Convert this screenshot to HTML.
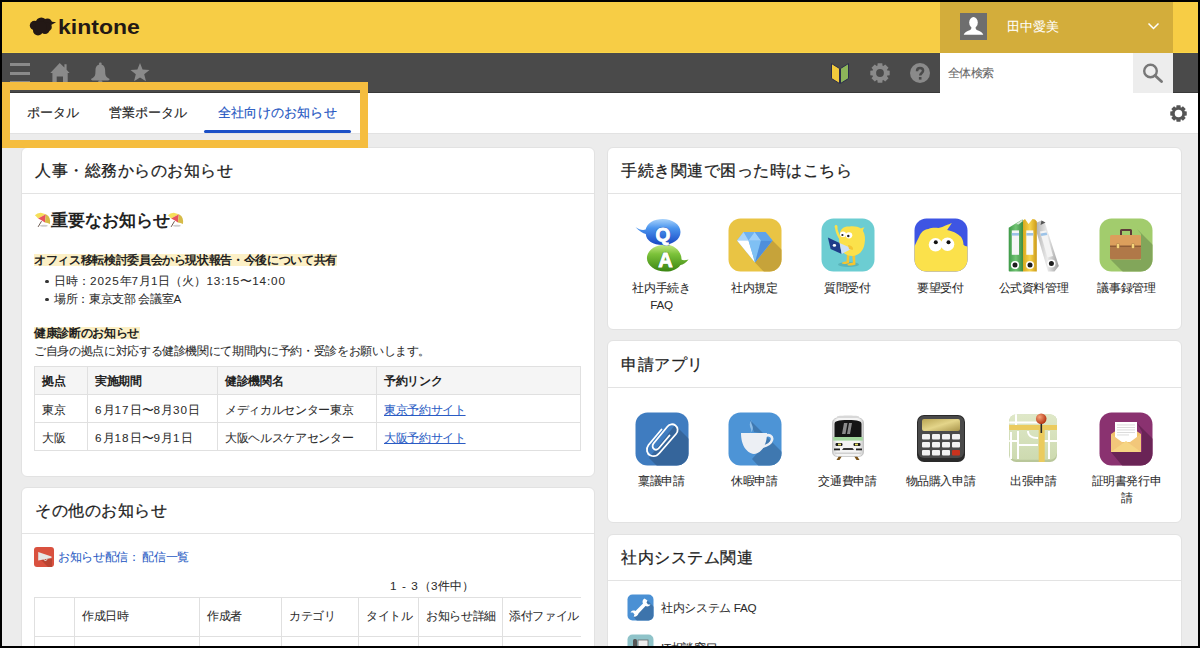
<!DOCTYPE html>
<html lang="ja">
<head>
<meta charset="utf-8">
<style>
*{box-sizing:border-box;margin:0;padding:0}
html,body{width:1200px;height:648px;overflow:hidden;background:#000}
body{font-family:"Liberation Sans",sans-serif;color:#222;position:relative}
.a{position:absolute}
#frame{position:absolute;left:2px;top:2px;width:1196px;height:644px;background:#ececec;overflow:hidden}
.t{position:absolute;white-space:nowrap;line-height:1;-webkit-text-stroke:0.05px currentColor}
.t[style*="bold"]{-webkit-text-stroke:0}
.card{position:absolute;background:#fff;border:1px solid #e2e2e2;border-radius:6px}
.ch{position:absolute;left:0;right:0;top:0;height:46px;border-bottom:1px solid #e3e3e3}
</style>
</head>
<body>
<div id="frame"></div>

<!-- yellow header -->
<div class="a" style="left:2px;top:2px;width:1196px;height:50px;background:#f7cd45"></div>
<div class="a" style="left:2px;top:52px;width:1196px;height:1px;background:#fad647"></div>
<!-- logo -->
<svg class="a" style="left:29px;top:16px" width="28" height="21" viewBox="0 0 28 21">
  <g fill="#231815">
    <circle cx="5.5" cy="9.5" r="4.7"/><circle cx="12.3" cy="7" r="5.6"/><circle cx="18.5" cy="7" r="4.5"/>
    <circle cx="9" cy="14.5" r="5"/><circle cx="16" cy="13.5" r="4.6"/><circle cx="18.5" cy="11" r="4.3"/><circle cx="12" cy="11" r="6"/>
    <path d="M21.3 5.4 L27.1 6.3 L22.5 8.7 Z"/>
  </g>
</svg>
<div class="t" style="left:58px;top:16.5px;font-size:23px;font-weight:bold;color:#231815;letter-spacing:0;transform:scale(1,0.9);transform-origin:0 1.5px">kintone</div>

<!-- user area -->
<div class="a" style="left:940px;top:2px;width:233px;height:50.5px;background:#d3ad3b"></div>
<div class="a" style="left:960px;top:13px;width:27px;height:27px;background:#6e6e6e;overflow:hidden">
  <svg width="27" height="27" viewBox="0 0 27 27"><g fill="#fff"><ellipse cx="13.5" cy="9.4" rx="4.3" ry="5.3"/><path d="M3.7 21.8 C4.3 19.6 7 18.4 9.6 17.3 C11 16.6 11.6 15.6 11.4 13.8 L15.6 13.8 C15.4 15.6 16 16.6 17.4 17.3 C20 18.4 22.7 19.6 23.3 21.8 Z"/></g></svg>
</div>
<div class="t" style="left:1007px;top:20px;font-size:13.3px;color:#fff">田中愛美</div>
<svg class="a" style="left:1147px;top:21px" width="13" height="10" viewBox="0 0 13 10"><path d="M1.5 2.5 L6.5 7.5 L11.5 2.5" fill="none" stroke="#fff" stroke-width="1.5"/></svg>

<!-- dark nav bar -->
<div class="a" style="left:2px;top:53px;width:1196px;height:39px;background:#4a4a4a"></div>
<div class="a" style="left:2px;top:92px;width:1196px;height:1px;background:#383838"></div>
<div class="a" style="left:10px;top:63px;width:20px;height:2.5px;background:#8a8a8a"></div>
<div class="a" style="left:10px;top:72px;width:20px;height:2.5px;background:#8a8a8a"></div>
<div class="a" style="left:10px;top:81px;width:20px;height:2.5px;background:#8a8a8a"></div>
<!-- home -->
<svg class="a" style="left:50px;top:62px" width="20" height="22" viewBox="0 0 20 22"><path fill="#8a8a8a" fill-rule="evenodd" d="M9.7 1 L0.3 11 L2.4 11 L2.4 22 L17.7 22 L17.7 11 L19.6 11 L16.6 7.8 L16.6 2.2 L14.4 2.2 L14.4 5.5 Z M6.7 14.5 L13 14.5 L13 22 L6.7 22 Z"/></svg>
<!-- bell -->
<svg class="a" style="left:91px;top:62px" width="20" height="22" viewBox="0 0 20 22"><g fill="#8a8a8a"><circle cx="9.3" cy="2" r="1.4"/><path d="M9.3 2.6 C6.3 2.6 4.6 4.8 4.5 8 L4.3 12 C4 14.6 2.2 15.8 0.3 16.8 C-0.2 17.4 0.3 18.3 1.5 18.5 L17.1 18.5 C18.3 18.3 18.8 17.4 18.3 16.8 C16.4 15.8 14.6 14.6 14.3 12 L14.1 8 C14 4.8 12.3 2.6 9.3 2.6 Z"/><ellipse cx="9.3" cy="19.5" rx="2" ry="1.2"/></g></svg>
<!-- star -->
<svg class="a" style="left:130px;top:62px" width="20" height="21" viewBox="0 0 20 21"><path fill="#8a8a8a" d="M10 1 L12.6 7.6 L19.5 7.9 L14.2 12.3 L16 19.3 L10 15.4 L4 19.3 L5.8 12.3 L0.5 7.9 L7.4 7.6 Z"/></svg>
<!-- wakaba -->
<svg class="a" style="left:830px;top:61px" width="20" height="24" viewBox="0 0 20 24"><path d="M1.5 2.5 L9.5 7.5 L9.5 22.5 L1.5 17.5 Z" fill="#f2ca3c" stroke="#2b2d4a" stroke-width="1"/><path d="M18.5 2.5 L10.5 7.5 L10.5 22.5 L18.5 17.5 Z" fill="#8db55a" stroke="#2b2d4a" stroke-width="1"/></svg>
<!-- gear -->
<svg class="a" style="left:870px;top:63px" width="20" height="20" viewBox="0 0 20 20"><g fill="#8a8a8a"><circle cx="10" cy="10" r="7.6"/><g id="t"><path d="M7.7 0.3 L12.3 0.3 L12.8 4 L7.2 4 Z"/><path d="M7.7 19.7 L12.3 19.7 L12.8 16 L7.2 16 Z"/><path d="M0.3 7.7 L0.3 12.3 L4 12.8 L4 7.2 Z"/><path d="M19.7 7.7 L19.7 12.3 L16 12.8 L16 7.2 Z"/></g><g transform="rotate(45 10 10)"><path d="M7.7 0.3 L12.3 0.3 L12.8 4 L7.2 4 Z"/><path d="M7.7 19.7 L12.3 19.7 L12.8 16 L7.2 16 Z"/><path d="M0.3 7.7 L0.3 12.3 L4 12.8 L4 7.2 Z"/><path d="M19.7 7.7 L19.7 12.3 L16 12.8 L16 7.2 Z"/></g></g><circle cx="10" cy="10" r="3.9" fill="#4a4a4a"/></svg>
<!-- help -->
<svg class="a" style="left:910px;top:63px" width="20" height="20" viewBox="0 0 20 20"><circle cx="10" cy="10" r="10" fill="#8a8a8a"/><path d="M7 8.2 C7 6.2 8.3 5 10 5 C11.9 5 13.1 6.2 13.1 7.8 C13.1 9.9 10.2 10.2 10.2 12.6" fill="none" stroke="#4a4a4a" stroke-width="2.5"/><rect x="8.9" y="14" width="2.6" height="2.6" fill="#4a4a4a"/></svg>
<!-- search -->
<div class="a" style="left:940px;top:53px;width:193px;height:40px;background:#fff"></div>
<div class="t" style="left:948px;top:67px;font-size:12px;letter-spacing:-0.6px;color:#666">全体検索</div>
<div class="a" style="left:1133px;top:53px;width:40px;height:40px;background:#ededed"></div>
<svg class="a" style="left:1142px;top:63px" width="22" height="20" viewBox="0 0 22 20"><circle cx="8.5" cy="8" r="6.3" fill="none" stroke="#777" stroke-width="2.4"/><path d="M13 12.5 L19.5 18.5" stroke="#777" stroke-width="2.8" stroke-linecap="round"/></svg>

<!-- tab bar -->
<div class="a" style="left:2px;top:93px;width:1196px;height:40px;background:#fff"></div>
<div class="a" style="left:2px;top:133px;width:1196px;height:1px;background:#e2e2e2"></div>
<div class="t" style="left:27px;top:106px;font-size:13.3px;color:#222;-webkit-text-stroke:0.15px #222">ポータル</div>
<div class="t" style="left:109px;top:106px;font-size:13.3px;color:#222;-webkit-text-stroke:0.15px #222">営業ポータル</div>
<div class="t" style="left:218px;top:106px;font-size:13.3px;letter-spacing:0.2px;color:#2456c2;-webkit-text-stroke:0.15px #2456c2">全社向けのお知らせ</div>
<div class="a" style="left:204px;top:130px;width:147px;height:3px;background:#1a4fc6;border-radius:2px"></div>
<svg class="a" style="left:1170px;top:105px" width="17" height="17" viewBox="0 0 20 20"><g fill="#555"><circle cx="10" cy="10" r="7.3"/><g id="t"><path d="M7.7 0.3 L12.3 0.3 L12.8 4 L7.2 4 Z"/><path d="M7.7 19.7 L12.3 19.7 L12.8 16 L7.2 16 Z"/><path d="M0.3 7.7 L0.3 12.3 L4 12.8 L4 7.2 Z"/><path d="M19.7 7.7 L19.7 12.3 L16 12.8 L16 7.2 Z"/></g><g transform="rotate(45 10 10)"><path d="M7.7 0.3 L12.3 0.3 L12.8 4 L7.2 4 Z"/><path d="M7.7 19.7 L12.3 19.7 L12.8 16 L7.2 16 Z"/><path d="M0.3 7.7 L0.3 12.3 L4 12.8 L4 7.2 Z"/><path d="M19.7 7.7 L19.7 12.3 L16 12.8 L16 7.2 Z"/></g></g><circle cx="10" cy="10" r="4.4" fill="#fff"/></svg>

<!-- left card 1 -->
<div class="card" style="left:21px;top:147px;width:574px;height:329.5px"></div>
<div class="a" style="left:22px;top:193px;width:572px;height:1px;background:#e3e3e3"></div>
<div class="t" style="left:35px;top:163px;font-size:16px;letter-spacing:0.5px;color:#222;-webkit-text-stroke:0.25px #222">人事・総務からのお知らせ</div>
<svg class="a" style="left:34px;top:211px" width="17" height="17" viewBox="0 0 17 17"><ellipse cx="9.9" cy="14.8" rx="3.8" ry="1" fill="#b8b8b8" opacity="0.7"/><path d="M7.5 10.2 L4.1 15.9" stroke="#6d5a50" stroke-width="1"/><path d="M0.9 4.3 Q3 2 6.8 1.75 L11.9 3.3 L4.1 7.5 Q2.5 5.5 0.9 4.3 Z" fill="#f5df5a"/><path d="M11.9 3.3 L4.1 7.5 Q7.5 9 10.9 11.6 Z" fill="#e8545c"/><path d="M11.9 3.3 Q15 5 15.6 7.2 Q16.5 10 16 13 Q13.5 11.8 10.9 11.6 Z" fill="#d6bb48"/></svg>
<div class="t" style="left:51px;top:212.5px;font-size:16.6px;font-weight:bold;color:#222">重要なお知らせ</div>
<svg class="a" style="left:167px;top:211px" width="17" height="17" viewBox="0 0 17 17"><ellipse cx="9.9" cy="14.8" rx="3.8" ry="1" fill="#b8b8b8" opacity="0.7"/><path d="M7.5 10.2 L4.1 15.9" stroke="#6d5a50" stroke-width="1"/><path d="M0.9 4.3 Q3 2 6.8 1.75 L11.9 3.3 L4.1 7.5 Q2.5 5.5 0.9 4.3 Z" fill="#f5df5a"/><path d="M11.9 3.3 L4.1 7.5 Q7.5 9 10.9 11.6 Z" fill="#e8545c"/><path d="M11.9 3.3 Q15 5 15.6 7.2 Q16.5 10 16 13 Q13.5 11.8 10.9 11.6 Z" fill="#d6bb48"/></svg>

<div class="a" style="left:34px;top:254px;width:303px;height:12px;background:#fcf0c6"></div>
<div class="t" style="left:34px;top:254px;font-size:11.7px;letter-spacing:-0.35px;font-weight:bold;color:#222">オフィス移転検討委員会から現状報告・今後について共有</div>
<div class="a" style="left:45px;top:279.5px;width:3.5px;height:3.5px;border-radius:50%;background:#333"></div>
<div class="t" style="left:54px;top:275px;font-size:11.7px;color:#2b2b2b">日時：<span style="letter-spacing:0.9px">2025</span>年<span style="letter-spacing:0.9px">7</span>月<span style="letter-spacing:0.9px">1</span>日（火）<span style="letter-spacing:0.9px">13:15</span>〜<span style="letter-spacing:0.9px">14:00</span></div>
<div class="a" style="left:45px;top:297.5px;width:3.5px;height:3.5px;border-radius:50%;background:#333"></div>
<div class="t" style="left:54px;top:293px;font-size:11.7px;letter-spacing:-0.35px;color:#2b2b2b">場所：東京支部 会議室A</div>

<div class="a" style="left:34px;top:327px;width:106px;height:12px;background:#fcf0c6"></div>
<div class="t" style="left:34px;top:327px;font-size:11.7px;letter-spacing:-0.35px;font-weight:bold;color:#222">健康診断のお知らせ</div>
<div class="t" style="left:34px;top:345px;font-size:11.7px;letter-spacing:-0.35px;color:#2b2b2b">ご自身の拠点に対応する健診機関にて期間内に予約・受診をお願いします。</div>

<!-- table 1 -->
<div class="a" style="left:34px;top:366px;width:547px;height:85px;border:1px solid #e0e0e0"></div>
<div class="a" style="left:35px;top:367px;width:545px;height:27px;background:#f5f5f5"></div>
<div class="a" style="left:35px;top:394px;width:545px;height:1px;background:#e0e0e0"></div>
<div class="a" style="left:35px;top:422px;width:545px;height:1px;background:#e0e0e0"></div>
<div class="a" style="left:87px;top:367px;width:1px;height:83px;background:#e0e0e0"></div>
<div class="a" style="left:217px;top:367px;width:1px;height:83px;background:#e0e0e0"></div>
<div class="a" style="left:376px;top:367px;width:1px;height:83px;background:#e0e0e0"></div>
<div class="t" style="left:42px;top:375px;font-size:11.7px;letter-spacing:-0.35px;font-weight:bold;color:#222">拠点</div>
<div class="t" style="left:95px;top:375px;font-size:11.7px;letter-spacing:-0.35px;font-weight:bold;color:#222">実施期間</div>
<div class="t" style="left:225px;top:375px;font-size:11.7px;letter-spacing:-0.35px;font-weight:bold;color:#222">健診機関名</div>
<div class="t" style="left:384px;top:375px;font-size:11.7px;letter-spacing:-0.35px;font-weight:bold;color:#222">予約リンク</div>
<div class="t" style="left:42px;top:404px;font-size:11.7px;letter-spacing:-0.35px;color:#2b2b2b">東京</div>
<div class="t" style="left:95px;top:404px;font-size:11.7px;color:#2b2b2b"><span style="letter-spacing:1px">6</span>月<span style="letter-spacing:1px">17</span>日〜<span style="letter-spacing:1px">8</span>月<span style="letter-spacing:1px">30</span>日</div>
<div class="t" style="left:225px;top:404px;font-size:11.7px;letter-spacing:-0.35px;color:#2b2b2b">メディカルセンター東京</div>
<div class="t" style="left:384px;top:404px;font-size:11.7px;letter-spacing:-0.35px;color:#2a5bc4;text-decoration:underline">東京予約サイト</div>
<div class="t" style="left:42px;top:432px;font-size:11.7px;letter-spacing:-0.35px;color:#2b2b2b">大阪</div>
<div class="t" style="left:95px;top:432px;font-size:11.7px;color:#2b2b2b"><span style="letter-spacing:1px">6</span>月<span style="letter-spacing:1px">18</span>日〜<span style="letter-spacing:1px">9</span>月<span style="letter-spacing:1px">1</span>日</div>
<div class="t" style="left:225px;top:432px;font-size:11.7px;letter-spacing:-0.35px;color:#2b2b2b">大阪ヘルスケアセンター</div>
<div class="t" style="left:384px;top:432px;font-size:11.7px;letter-spacing:-0.35px;color:#2a5bc4;text-decoration:underline">大阪予約サイト</div>

<!-- left card 2 -->
<div class="card" style="left:21px;top:487px;width:574px;height:200px"></div>
<div class="a" style="left:22px;top:533px;width:572px;height:1px;background:#e3e3e3"></div>
<div class="t" style="left:35px;top:503px;font-size:16px;letter-spacing:0.5px;color:#222;-webkit-text-stroke:0.25px #222">その他のお知らせ</div>
<svg class="a" style="left:34px;top:547px" width="20" height="20" viewBox="0 0 20 20"><rect x="0" y="0" width="20" height="20" rx="3" fill="#d9513f"/><path d="M4 6 L18 12 L18 20 L14 20 L4 10 Z" fill="#b2412f" opacity="0.8"/><path d="M4.2 5 L17.5 9.5 L17.5 11 L4.2 13.5 Z" fill="#e6e6e6"/><path d="M10 12.3 C10 14 13 14 13 12" fill="none" stroke="#e6e6e6" stroke-width="1"/></svg>
<div class="t" style="left:58px;top:551px;font-size:11.7px;letter-spacing:-0.35px;color:#2a5bc4">お知らせ配信： 配信一覧</div>
<div class="t" style="left:390px;top:580px;font-size:11.7px;color:#2b2b2b"><span style="letter-spacing:1.1px">1 - 3</span>（<span style="letter-spacing:0.6px">3</span>件中）</div>
<!-- table 2 -->
<div class="a" style="left:34px;top:597px;width:547px;height:1px;background:#e0e0e0"></div>
<div class="a" style="left:34px;top:636px;width:547px;height:1px;background:#e0e0e0"></div>
<div class="a" style="left:34px;top:597px;width:1px;height:60px;background:#e0e0e0"></div>
<div class="a" style="left:74px;top:597px;width:1px;height:60px;background:#e0e0e0"></div>
<div class="a" style="left:199px;top:597px;width:1px;height:60px;background:#e0e0e0"></div>
<div class="a" style="left:281px;top:597px;width:1px;height:60px;background:#e0e0e0"></div>
<div class="a" style="left:358px;top:597px;width:1px;height:60px;background:#e0e0e0"></div>
<div class="a" style="left:418px;top:597px;width:1px;height:60px;background:#e0e0e0"></div>
<div class="a" style="left:502px;top:597px;width:1px;height:60px;background:#e0e0e0"></div>
<div class="t" style="left:82px;top:610px;font-size:11.7px;letter-spacing:-0.35px;color:#2b2b2b">作成日時</div>
<div class="t" style="left:207px;top:610px;font-size:11.7px;letter-spacing:-0.35px;color:#2b2b2b">作成者</div>
<div class="t" style="left:289px;top:610px;font-size:11.7px;letter-spacing:-0.35px;color:#2b2b2b">カテゴリ</div>
<div class="t" style="left:366px;top:610px;font-size:11.7px;letter-spacing:-0.35px;color:#2b2b2b">タイトル</div>
<div class="t" style="left:426px;top:610px;font-size:11.7px;letter-spacing:-0.35px;color:#2b2b2b">お知らせ詳細</div>
<div class="t" style="left:509px;top:610px;font-size:11.7px;letter-spacing:-0.35px;color:#2b2b2b">添付ファイル</div>


<!-- right card 1 -->
<div class="card" style="left:607px;top:147px;width:575px;height:182.5px"></div>
<div class="a" style="left:608px;top:193px;width:573px;height:1px;background:#e3e3e3"></div>
<div class="t" style="left:621px;top:163px;font-size:16px;letter-spacing:0.5px;color:#222;-webkit-text-stroke:0.25px #222">手続き関連で困った時はこちら</div>

<!-- QA -->
<svg class="a" style="left:635px;top:218px" width="54" height="54" viewBox="0 0 54 54">
 <defs>
  <linearGradient id="gq" x1="0" y1="0" x2="0" y2="1"><stop offset="0" stop-color="#a8d2fb"/><stop offset="0.35" stop-color="#4b95ee"/><stop offset="1" stop-color="#1746c4"/></linearGradient>
  <linearGradient id="ga" x1="0" y1="0" x2="0" y2="1"><stop offset="0" stop-color="#c4e882"/><stop offset="0.35" stop-color="#7cc23a"/><stop offset="1" stop-color="#3a8512"/></linearGradient>
 </defs>
 <path d="M0.6 9.3 C4 13 8 15.5 10.8 16 C11 22.5 18 27 27.8 27 C37.5 27 45.5 21.5 45.5 14 C45.5 6.5 37.5 1 27.8 1 C19 1 12.3 5 10.6 11.5 C7.5 12.5 4 11.5 0.6 9.3 Z" fill="url(#gq)"/>
 <path d="M53.6 41.4 C50 42.5 47.5 42.3 46.5 41.5 C46.8 34 39.5 26.6 30.7 26.6 C20 26.6 11.9 33 11.9 40.1 C11.9 47.3 20 53.6 30.7 53.6 C37.5 53.6 42.5 51 45.5 47 C48 46.5 51.5 44.5 53.6 41.4 Z" fill="url(#ga)"/>
 <text x="27.8" y="23" text-anchor="middle" fill="#2a56b8" stroke="#2a56b8" stroke-width="2" style="font:bold 19px 'Liberation Sans',sans-serif" opacity="0.6">Q</text>
 <text x="27.8" y="23" text-anchor="middle" fill="#fff" stroke="#fff" stroke-width="0.9" style="font:bold 19px 'Liberation Sans',sans-serif">Q</text>
 <text x="30.5" y="48.5" text-anchor="middle" fill="#3a7a18" stroke="#3a7a18" stroke-width="2" style="font:bold 20px 'Liberation Sans',sans-serif" opacity="0.6">A</text>
 <text x="30.5" y="48.5" text-anchor="middle" fill="#fff" stroke="#fff" stroke-width="0.9" style="font:bold 20px 'Liberation Sans',sans-serif">A</text>
</svg>
<div class="t" style="left:615px;top:282px;width:93px;text-align:center;font-size:11.7px;letter-spacing:-0.35px;color:#2b2b2b">社内手続き</div>
<div class="t" style="left:615px;top:299px;width:93px;text-align:center;font-size:11.7px;letter-spacing:-0.35px;color:#2b2b2b">FAQ</div>

<!-- diamond -->
<svg class="a" style="left:728px;top:218px" width="54" height="54" viewBox="0 0 54 54">
 <defs><clipPath id="c1"><rect x="0.5" y="0.5" width="53" height="53" rx="12"/></clipPath></defs>
 <rect x="0.5" y="0.5" width="53" height="53" rx="12" fill="#e9c444"/>
 <g clip-path="url(#c1)"><path d="M44.5 22.5 L27 44.5 L38 56 L60 56 L60 38 Z" fill="#c6a33a"/></g>
 <path d="M15.5 14 L37.5 14 L44.5 22.5 L27 44.5 L9 22.5 Z" fill="#6fb2ef"/>
 <path d="M9 22.5 L15.5 14 L20.5 22.5 Z" fill="#a9d4f8"/>
 <path d="M9 22.5 L20.5 22.5 L27 44.5 Z" fill="#ffffff"/>
 <path d="M20.5 22.5 L33 22.5 L27 44.5 Z" fill="#7fc0f4"/>
 <path d="M20.5 22.5 L26.7 14 L33 22.5 Z" fill="#9ed0fa"/>
 <path d="M33 22.5 L44.5 22.5 L27 44.5 Z" fill="#4f8fdc"/>
 <path d="M26.7 14 L37.5 14 L44.5 22.5 L33 22.5 Z" fill="#5fa3ea"/>
</svg>
<div class="t" style="left:708px;top:282px;width:93px;text-align:center;font-size:11.7px;letter-spacing:-0.35px;color:#2b2b2b">社内規定</div>

<!-- 質問受付 -->
<svg class="a" style="left:821px;top:218px" width="54" height="54" viewBox="0 0 54 54">
 <rect x="0.5" y="0.5" width="53" height="53" rx="12" fill="#6ccdd2"/>
 <ellipse cx="27.5" cy="46.5" rx="10.5" ry="2.6" fill="#5ab5ba"/>
 <path d="M26 36 L25.5 43.5 C22 43.5 20.5 44.5 21 45.5 C22 46.3 26 46 28 45 L28.5 36 Z" fill="#f5c531"/>
 <path d="M31 36 L32 44.5 C28.5 45 26 46 26.5 47 C27.5 48 32 47.5 34.5 46.5 L34 36 Z" fill="#f5c531"/>
 <path d="M14 10 C13 8 14 6.5 15.5 7 C17 7.5 16.5 9.5 16.5 11 C17.5 15 19 18 21 20 L19 22 C16.5 19 14.5 14.5 14 10 Z" fill="#fbe14b"/>
 <path d="M19 16 C19 10.5 23.5 8 28.5 8.5 C33 8 37 8.5 40 10.5 C41 9.8 42.5 9.5 43.5 9.5 C42.5 10.5 42 11.5 42 13 C44 16 44.5 21 43.5 26 C42.5 33 37.5 38 31 38 C24 38 19.5 33 18.5 26 C18 22 18.3 19 19 16 Z" fill="#fbe14b"/>
 <ellipse cx="22" cy="16.3" rx="3" ry="2.8" fill="#fff"/><ellipse cx="28" cy="17.3" rx="3.3" ry="3.1" fill="#fff"/>
 <circle cx="21.4" cy="17" r="1.1" fill="#222"/><circle cx="27.3" cy="18" r="1.2" fill="#222"/>
 <path d="M6.9 19.4 L18.6 25 L20.7 36.1 L9.6 31 Z" fill="#1f3d8a"/>
 <path d="M18.6 25 L31 30.5 L20.7 36.1 Z" fill="#cfe0f6"/>
 <ellipse cx="13.4" cy="27.4" rx="1.7" ry="1.4" fill="#fff"/>
 <path d="M27 27 C31 27.5 33 30 31.5 32 L28 31 Z" fill="#f5c531"/>
</svg>
<div class="t" style="left:801px;top:282px;width:93px;text-align:center;font-size:11.7px;letter-spacing:-0.35px;color:#2b2b2b">質問受付</div>

<!-- 要望受付 -->
<svg class="a" style="left:914px;top:218px" width="54" height="54" viewBox="0 0 54 54">
 <defs><clipPath id="c2"><rect x="0.5" y="0.5" width="53" height="53" rx="12"/></clipPath></defs>
 <rect x="0.5" y="0.5" width="53" height="53" rx="12" fill="#3e55e3"/>
 <g clip-path="url(#c2)">
 <path d="M-2 60 L-2 28 L0.6 28 C2 25 3.5 22 5 19 C7 14 10 11.5 14.4 11 C18 9.5 21 9.8 24.5 10 C27 9.6 29.5 8.5 31.5 7.5 C34 6.5 36.5 5.5 37.8 4.9 C36.5 7 34.5 9.5 33.2 12 C38 13 43 15 46.9 18.7 C48.5 21 49.5 24 49.5 26.8 C51 28 52 28.5 56 29 L56 60 Z" fill="#fbe14b"/>
 </g>
 <circle cx="21.5" cy="26.8" r="6.8" fill="#fff"/><circle cx="33.5" cy="26.3" r="6.8" fill="#fff"/>
 <circle cx="21.8" cy="24.3" r="2" fill="#111"/><circle cx="34.5" cy="24.3" r="2" fill="#111"/>
</svg>
<div class="t" style="left:894px;top:282px;width:93px;text-align:center;font-size:11.7px;letter-spacing:-0.35px;color:#2b2b2b">要望受付</div>

<!-- 公式資料管理 binders -->
<svg class="a" style="left:1006px;top:218px" width="54" height="54" viewBox="0 0 54 54">
 <defs>
  <linearGradient id="gg" x1="0" x2="1"><stop offset="0" stop-color="#3e9a48"/><stop offset="0.5" stop-color="#72c474"/><stop offset="1" stop-color="#3d8c42"/></linearGradient>
  <linearGradient id="gy" x1="0" x2="1"><stop offset="0" stop-color="#d9a81e"/><stop offset="0.5" stop-color="#f6d34c"/><stop offset="1" stop-color="#cc9a18"/></linearGradient>
  <linearGradient id="gs" x1="0" x2="1"><stop offset="0" stop-color="#b0b0b0"/><stop offset="0.5" stop-color="#ececec"/><stop offset="1" stop-color="#9c9c9c"/></linearGradient>
 </defs>
 <path d="M29.8 5 L35.5 2.5 L39 5 L52.8 48 L48.5 53.4 L42 53.4 L30.5 14 Z" fill="url(#gs)"/>
 <path d="M35.5 2.5 L39.5 4.5 L34.5 7 Z" fill="#555"/>
 <path d="M2.7 9.8 L15.9 1.7 L17 1.7 L17 53.6 L3.5 53.6 Q2.7 53.6 2.7 52.5 Z" fill="url(#gg)"/>
 <path d="M10 6 L15.9 1.7 L17 3 L12.5 6.5 Z" fill="#d8e8d8"/>
 <path d="M17 2.5 L19 1 L22.5 6 L26.5 1 L29 1.5 L30.8 3.5 L30.8 53.4 L17 53.4 Z" fill="url(#gy)"/>
 <rect x="5.8" y="12.4" width="7.2" height="24.4" fill="#f6f6f6"/><rect x="5.8" y="15" width="7.2" height="2.6" fill="#9cc3e8"/>
 <rect x="20.3" y="12.4" width="7" height="24.4" fill="#fafafa"/><rect x="20.3" y="15" width="7" height="2.6" fill="#9cc3e8"/>
 <path d="M34 13.5 L40 12.5 L47 38 L41.5 39.5 Z" fill="#f4f4f4"/><path d="M34.6 15.5 L40.6 14.5 L41.3 17 L35.3 18 Z" fill="#9cc3e8"/>
 <circle cx="9" cy="47" r="4.1" fill="#fff"/><circle cx="9" cy="47" r="2.5" fill="#1e1e1e"/>
 <circle cx="24" cy="47" r="4.1" fill="#fff"/><circle cx="24" cy="47" r="2.5" fill="#1e1e1e"/>
 <circle cx="45.4" cy="45.5" r="4.1" fill="#fff"/><circle cx="45.4" cy="45.5" r="2.5" fill="#1e1e1e"/>
</svg>
<div class="t" style="left:987px;top:282px;width:93px;text-align:center;font-size:11.7px;letter-spacing:-0.35px;color:#2b2b2b">公式資料管理</div>

<!-- 議事録管理 briefcase -->
<svg class="a" style="left:1099px;top:218px" width="54" height="54" viewBox="0 0 54 54">
 <defs><clipPath id="c3"><rect x="0.5" y="0.5" width="53" height="53" rx="12"/></clipPath></defs>
 <rect x="0.5" y="0.5" width="53" height="53" rx="12" fill="#a2cc6d"/>
 <g clip-path="url(#c3)"><path d="M38 11 L60 33 L60 60 L30 60 L12 42 L42 42 L42 16 Z" fill="#82a65a"/></g>
 <path d="M21 17 L21 12.5 Q21 11 22.5 11 L31.5 11 Q33 11 33 12.5 L33 17 L31 17 L31 13 L23 13 L23 17 Z" fill="#5e3a3a"/>
 <rect x="11" y="17" width="31" height="12.5" rx="1.5" fill="#dc9f5c"/>
 <rect x="11" y="28" width="31" height="13.5" rx="1.5" fill="#b07848"/>
 <rect x="11" y="27.5" width="31" height="1.5" fill="#8e5c36"/>
 <rect x="17.5" y="25.5" width="3" height="5" rx="1" fill="#f6d57a" stroke="#8e5c36" stroke-width="0.4"/>
 <rect x="32.5" y="25.5" width="3" height="5" rx="1" fill="#f6d57a" stroke="#8e5c36" stroke-width="0.4"/>
</svg>
<div class="t" style="left:1080px;top:282px;width:93px;text-align:center;font-size:11.7px;letter-spacing:-0.35px;color:#2b2b2b">議事録管理</div>

<!-- right card 2 -->
<div class="card" style="left:607px;top:340px;width:575px;height:183px"></div>
<div class="a" style="left:608px;top:386.5px;width:573px;height:1px;background:#e3e3e3"></div>
<div class="t" style="left:621px;top:357px;font-size:16px;letter-spacing:0.5px;color:#222;-webkit-text-stroke:0.25px #222">申請アプリ</div>

<!-- paperclip -->
<svg class="a" style="left:635px;top:412px" width="54" height="54" viewBox="0 0 54 54">
 <defs><clipPath id="c4"><rect x="0.5" y="0.5" width="53" height="53" rx="12"/></clipPath></defs>
 <rect x="0.5" y="0.5" width="53" height="53" rx="12" fill="#3f7cc0"/>
 <g clip-path="url(#c4)"><path d="M40 13 L62 35 L62 62 L30 62 L14 46 Z" fill="#35659b"/></g>
 <path d="M26.5 17.5 L13.5 33 C10.5 37 12 42 15.5 43.5 C19 45 22 44 24.5 41 L41 22 C43.5 19 43 15.5 40.5 13.5 C38 11.5 34.5 12 32.5 14.5 L18.5 31.5 C17 33.5 17.5 36 19 37 C20.5 38 22.5 37.8 24 36 L34.5 23.5" fill="none" stroke="#fff" stroke-width="1.8" stroke-linecap="round" stroke-linejoin="round"/>
</svg>
<div class="t" style="left:615px;top:475px;width:93px;text-align:center;font-size:11.7px;letter-spacing:-0.35px;color:#2b2b2b">稟議申請</div>

<!-- cup -->
<svg class="a" style="left:728px;top:412px" width="54" height="54" viewBox="0 0 54 54">
 <defs><clipPath id="c5"><rect x="0.5" y="0.5" width="53" height="53" rx="12"/></clipPath></defs>
 <rect x="0.5" y="0.5" width="53" height="53" rx="12" fill="#4d94d6"/>
 <g clip-path="url(#c5)"><path d="M22 8 L62 48 L62 62 L38 62 L24 47 L34 36 L39 22 L26 20 Z" fill="#3f78b0"/></g>
 <path d="M23.5 8 C21 11 21.5 14 23 17 C23.5 18.5 23 20 22 21 C25 19 25.5 16 24 13 C23 11 23 9.5 23.5 8 Z" fill="#8fbde6"/>
 <path d="M13 21 L39 21 C39 26 38 33 34 37.5 C31 41 28 42 26 42 C24 42 21 41 18 37.5 C14 33 13 26 13 21 Z" fill="#eceff4"/>
 <path d="M37 24 C41 22 45 24 44 28 C43 32 38 34 34 35" fill="none" stroke="#eceff4" stroke-width="2.6"/>
</svg>
<div class="t" style="left:708px;top:475px;width:93px;text-align:center;font-size:11.7px;letter-spacing:-0.35px;color:#2b2b2b">休暇申請</div>

<!-- train -->
<svg class="a" style="left:821px;top:412px" width="54" height="54" viewBox="0 0 54 54">
 <defs><linearGradient id="gtr" x1="0" x2="1"><stop offset="0" stop-color="#cfcfcf"/><stop offset="0.15" stop-color="#f4f4f4"/><stop offset="0.85" stop-color="#f4f4f4"/><stop offset="1" stop-color="#c8c8c8"/></linearGradient></defs>
 <path d="M18 44 L15.5 48 L18.5 48 L21 44 Z M36 44 L38.5 48 L35.5 48 L33 44 Z" fill="#7a5218"/>
 <path d="M11.5 11 C11.5 6 16 5 27 5 C38 5 42.5 6 42.5 11 L42.5 40 C42.5 43 40.5 44.5 37.5 44.5 L16.5 44.5 C13.5 44.5 11.5 43 11.5 40 Z" fill="url(#gtr)" stroke="#b0b0b0" stroke-width="0.6"/>
 <path d="M16 4.5 C19 3.3 35 3.3 38 4.5 L38 6 L16 6 Z" fill="#d8d8d8"/>
 <path d="M13.5 12 C13.5 9 17 8 27 8 C37 8 40.5 9 40.5 12 L40.5 25 L13.5 25 Z" fill="#151515"/>
 <path d="M23 11 L26.5 11 L24.5 22 L21 22 Z M28 11 L31 11 L29 22 L26 22 Z" fill="#8a8a8a"/>
 <rect x="12.2" y="25" width="29.6" height="3.6" fill="#a3d79e"/>
 <rect x="14.5" y="31" width="7" height="3" rx="1.2" fill="#1a1a1a"/><rect x="32.5" y="31" width="7" height="3" rx="1.2" fill="#1a1a1a"/>
 <rect x="17" y="31.6" width="3" height="1.8" fill="#e9e36a"/><rect x="34" y="31.6" width="3" height="1.8" fill="#e9e36a"/>
 <rect x="13" y="36.5" width="6" height="1.8" fill="#222"/><rect x="35" y="36.5" width="6" height="1.8" fill="#222"/>
 <path d="M21 38 L33 38 L31.5 36 L22.5 36 Z" fill="#333"/>
 <rect x="14" y="40.5" width="26" height="1.5" fill="#d0d0d0"/>
</svg>
<div class="t" style="left:801px;top:475px;width:93px;text-align:center;font-size:11.7px;letter-spacing:-0.35px;color:#2b2b2b">交通費申請</div>

<!-- calculator -->
<svg class="a" style="left:914px;top:412px" width="54" height="54" viewBox="0 0 54 54">
 <defs><linearGradient id="glcd" x1="0" x2="1" y1="0" y2="1"><stop offset="0" stop-color="#b9a553"/><stop offset="0.5" stop-color="#e4d58a"/><stop offset="1" stop-color="#a8944a"/></linearGradient></defs>
 <rect x="3" y="3" width="48" height="47" rx="7" fill="#2a2a2a"/>
 <rect x="4" y="4" width="46" height="42" rx="6" fill="#4a4a4a"/>
 <rect x="8" y="7" width="38" height="12" rx="2" fill="url(#glcd)"/>
 <g fill="#f2f2f2">
  <rect x="8" y="22" width="8" height="5.5" rx="1"/><rect x="18" y="22" width="8" height="5.5" rx="1"/><rect x="28" y="22" width="8" height="5.5" rx="1"/><rect x="38" y="22" width="8" height="5.5" rx="1"/>
  <rect x="8" y="30" width="8" height="5.5" rx="1"/><rect x="18" y="30" width="8" height="5.5" rx="1"/><rect x="28" y="30" width="8" height="5.5" rx="1"/><rect x="38" y="30" width="8" height="5.5" rx="1"/>
  <rect x="8" y="38" width="8" height="5.5" rx="1"/><rect x="18" y="38" width="8" height="5.5" rx="1"/><rect x="28" y="38" width="8" height="5.5" rx="1"/>
 </g>
 <rect x="38" y="38" width="8" height="5.5" rx="1" fill="#c8321e"/>
</svg>
<div class="t" style="left:894px;top:475px;width:93px;text-align:center;font-size:11.7px;letter-spacing:-0.35px;color:#2b2b2b">物品購入申請</div>

<!-- map -->
<svg class="a" style="left:1007px;top:412px" width="54" height="54" viewBox="0 0 54 54">
 <defs><radialGradient id="gpin" cx="0.35" cy="0.35" r="0.7"><stop offset="0" stop-color="#f6a57a"/><stop offset="1" stop-color="#b3300e"/></radialGradient>
 <linearGradient id="gmap" x1="0" x2="0" y1="0" y2="1"><stop offset="0" stop-color="#dfe8c8"/><stop offset="1" stop-color="#cddab0"/></linearGradient></defs>
 <rect x="2.2" y="2.5" width="47.8" height="47.5" rx="7" fill="#b9c79a"/>
 <rect x="2.2" y="2.2" width="47.8" height="45.5" rx="7" fill="url(#gmap)"/>
 <g fill="#fff">
  <rect x="8" y="2.2" width="2" height="11"/><rect x="2.2" y="9.5" width="30" height="2"/><rect x="3" y="20" width="2" height="27"/><rect x="10" y="19" width="2" height="28"/><rect x="10" y="32" width="21" height="2"/><rect x="2.2" y="28" width="8" height="2"/><rect x="37" y="28" width="13" height="2"/><rect x="41" y="19" width="2" height="28"/><path d="M20 19 C20 24 24 27 31 27 L31 25 C25 25 22 23 22 19 Z"/>
 </g>
 <rect x="2.2" y="13" width="47.8" height="5" fill="#ebcb5e"/>
 <rect x="31.7" y="13" width="6" height="37" fill="#ebcb5e"/>
 <rect x="33.5" y="8" width="1.6" height="13" fill="#2a2a2a"/>
 <circle cx="34.2" cy="6.7" r="5.3" fill="url(#gpin)"/>
</svg>
<div class="t" style="left:987px;top:475px;width:93px;text-align:center;font-size:11.7px;letter-spacing:-0.35px;color:#2b2b2b">出張申請</div>

<!-- envelope -->
<svg class="a" style="left:1099px;top:412px" width="54" height="54" viewBox="0 0 54 54">
 <defs><clipPath id="c6"><rect x="0.5" y="0.5" width="53" height="53" rx="12"/></clipPath></defs>
 <rect x="0.5" y="0.5" width="53" height="53" rx="12" fill="#8a3270"/>
 <g clip-path="url(#c6)"><path d="M38 11 L62 35 L62 62 L30 62 L12 40 L43 40 L43 20 Z" fill="#6a2456"/></g>
 <path d="M12 22 L27 12 L42 22 L42 40 L12 40 Z" fill="#f0c06a"/>
 <rect x="16" y="10" width="22" height="20" fill="#fff"/>
 <g fill="#d8d8d8"><rect x="18" y="12.5" width="18" height="0.9"/><rect x="18" y="15" width="18" height="0.9"/><rect x="18" y="17.5" width="18" height="0.9"/><rect x="18" y="20" width="18" height="0.9"/><rect x="18" y="22.5" width="12" height="0.9"/></g>
 <path d="M12 22 L27 33 L42 22 L42 40 L12 40 Z" fill="#f2c77a"/>
 <path d="M12 40 L27 29 L42 40 Z" fill="#f6d583"/>
</svg>
<div class="t" style="left:1080px;top:475px;width:93px;text-align:center;font-size:11.7px;letter-spacing:-0.35px;color:#2b2b2b">証明書発行申</div>
<div class="t" style="left:1080px;top:492px;width:93px;text-align:center;font-size:11.7px;letter-spacing:-0.35px;color:#2b2b2b">請</div>

<!-- right card 3 -->
<div class="card" style="left:607px;top:534px;width:575px;height:200px"></div>
<div class="a" style="left:608px;top:580px;width:573px;height:1px;background:#e3e3e3"></div>
<div class="t" style="left:621px;top:550px;font-size:16px;letter-spacing:0.5px;color:#222;-webkit-text-stroke:0.25px #222">社内システム関連</div>
<svg class="a" style="left:627px;top:594px" width="27" height="27" viewBox="0 0 27 27">
 <defs><clipPath id="c7"><rect x="0.5" y="0.5" width="26" height="26" rx="5"/></clipPath></defs>
 <rect x="0.5" y="0.5" width="26" height="26" rx="5" fill="#4a90d4"/>
 <g clip-path="url(#c7)"><path d="M20 6 L32 18 L32 32 L14 32 L6 22 Z" fill="#3d74ac"/></g>
 <path d="M17.5 4.5 C15.5 5.5 15 8 16 9.5 L8.5 17 C7 16 4.5 16.5 3.5 18.5 L6 18.5 L7.5 20.5 L6.5 22.5 C8.5 23 11 22 11.5 19.5 L18.5 12 C20 13 22.5 12.5 23.5 10.5 L21 10.5 L19.5 8.5 L20.5 6.5 Z" fill="#fff"/>
</svg>
<div class="t" style="left:661px;top:602px;font-size:11.7px;letter-spacing:-0.35px;color:#2b2b2b">社内システム FAQ</div>
<svg class="a" style="left:627px;top:634px" width="27" height="27" viewBox="0 0 27 27">
 <rect x="0.5" y="0.5" width="26" height="26" rx="5" fill="#8fc3c9"/>
 <rect x="6" y="5" width="4" height="12" rx="1.5" fill="#555"/><rect x="11" y="6" width="10" height="9" fill="#eee" stroke="#666" stroke-width="0.8"/>
</svg>
<div class="t" style="left:661px;top:642px;font-size:11.7px;letter-spacing:-0.35px;color:#2b2b2b">IT相談窓口</div>


<!-- orange highlight box -->
<div class="a" style="left:2px;top:82px;width:366px;height:66px;border:8px solid #f5bd3f"></div>
<div class="a" style="left:0;top:0;width:1200px;height:2px;background:#000"></div>
<div class="a" style="left:0;top:646px;width:1200px;height:2px;background:#000"></div>
<div class="a" style="left:0;top:0;width:2px;height:648px;background:#000"></div>
<div class="a" style="left:1198px;top:0;width:2px;height:648px;background:#000"></div>
</body>
</html>
